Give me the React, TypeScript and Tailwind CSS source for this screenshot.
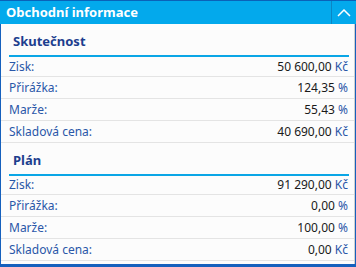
import React from "react";

type Row = { label: string; num: string; unit: string };

const skut: Row[] = [
  { label: "Zisk:", num: "50 600,00", unit: "Kč" },
  { label: "Přirážka:", num: "124,35", unit: "%" },
  { label: "Marže:", num: "55,43", unit: "%" },
  { label: "Skladová cena:", num: "40 690,00", unit: "Kč" },
];
const plan: Row[] = [
  { label: "Zisk:", num: "91 290,00", unit: "Kč" },
  { label: "Přirážka:", num: "0,00", unit: "%" },
  { label: "Marže:", num: "100,00", unit: "%" },
  { label: "Skladová cena:", num: "0,00", unit: "Kč" },
];

function Section({ title, rows, first }: { title: string; rows: Row[]; first: boolean }) {
  return (
    <div className="flex flex-col">
      <div className="h-[31px] flex items-end pl-[12px] pb-[4px] text-[13px] font-bold text-[#1d3e8e]">
        {title}
      </div>
      <div className="h-[2px] bg-[#0aa6e6] ml-[8px] mr-[5px]" />
      {rows.map((r, i) => (
        <div
          key={r.label}
          className={
            (i === 0 ? (first ? "h-[20px] " : "h-[19px] ") : "h-[22px] ") +
            "flex items-center justify-between pl-[8px] pr-[6px] border-b border-[#e4e4e4] text-[12px]"
          }
        >
          <span className="text-[#2a57a8]">{r.label}</span>
          <span>
            <span className="text-[#1a1a1a]">{r.num}</span>
            <span className="text-[#2a57a8]">{" " + r.unit}</span>
          </span>
        </div>
      ))}
    </div>
  );
}

export default function App() {
  return (
    <div
      className="w-[356px] h-[267px] flex flex-col bg-[#fcfcfc] overflow-hidden"
      style={{ fontFamily: '"Noto Sans", "Open Sans", sans-serif' }}
    >
      <div className="h-[24px] bg-[#03a9ec] border-t border-[#0a62b8] flex items-stretch">
        <div className="flex-1 flex items-center pl-[6px] text-white font-bold text-[13px]">
          Obchodní informace
        </div>
        <div className="w-[25px] border-l border-[#0b86c4] flex items-center justify-center">
          <svg width="14" height="8" viewBox="0 0 14 8">
            <path d="M1 7 L7 1 L13 7" fill="none" stroke="white" strokeWidth="1.5" />
          </svg>
        </div>
      </div>
      <div className="flex-1 flex border-l border-r border-[#1560bd] border-b-[3px]">
        <div className="flex-1 flex flex-col border-r border-[#cfcfcf]">
          <Section title="Skutečnost" rows={skut} first={true} />
          <div className="h-[0px]" />
          <Section title="Plán" rows={plan} first={false} />
        </div>
      </div>
    </div>
  );
}
